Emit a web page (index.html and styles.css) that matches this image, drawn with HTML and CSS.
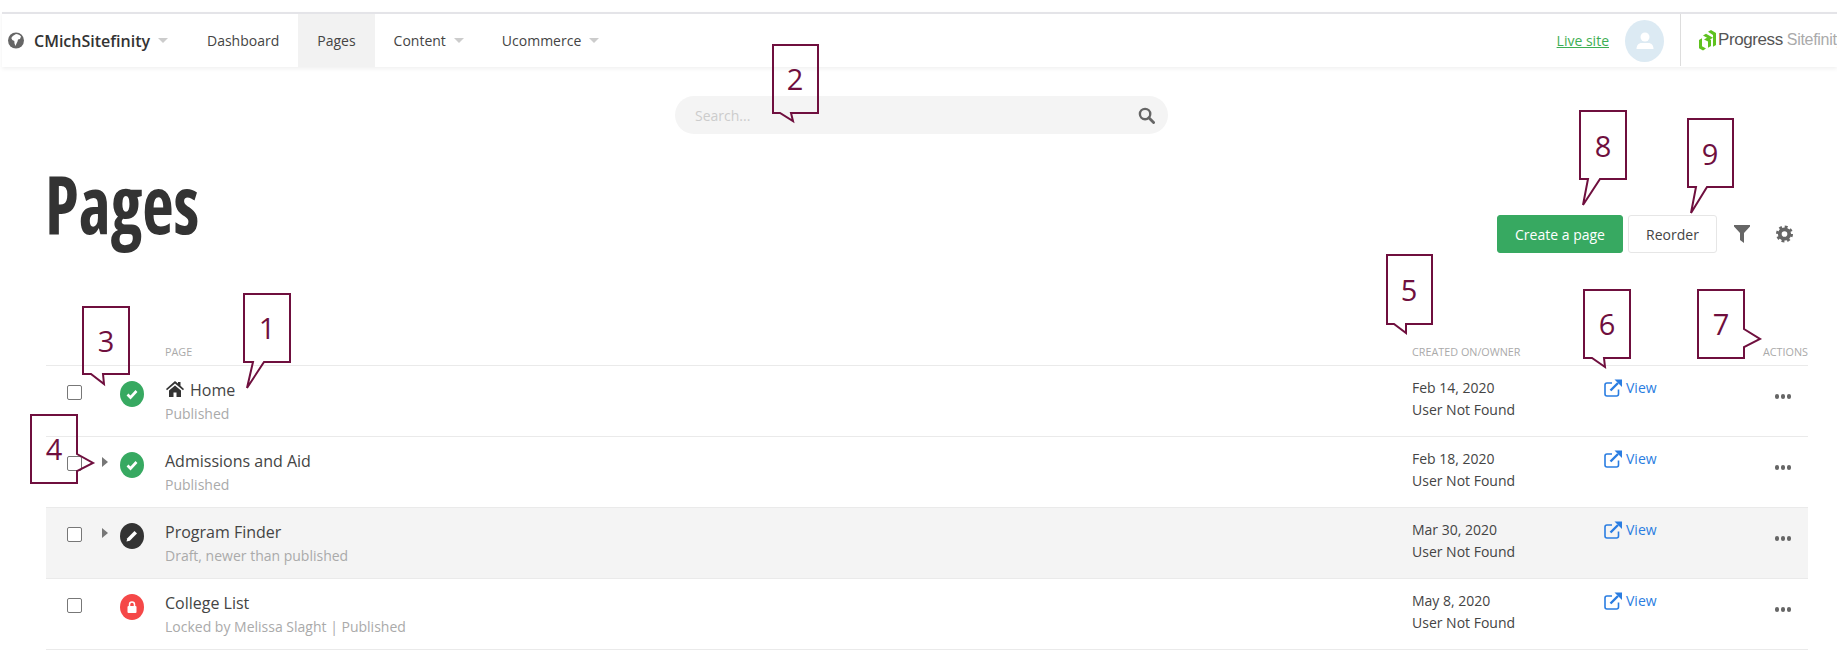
FILE: index.html
```html
<!DOCTYPE html>
<html lang="en">
<head>
    <meta charset="UTF-8">
    <meta name="viewport" content="width=device-width, initial-scale=1.0">
    <title>Pages</title>
    <link rel="stylesheet" href="styles.css">
</head>
<body>
    <header class="topbar">
        <div class="brand">
            <svg class="globe" viewBox="0 0 16 16"><circle cx="8" cy="8" r="8" fill="#666"/><path d="M8 1.500c2 .2 4 1 5 2.500l-1 2.500-2 .5-.5 2-1 2-1 2.500-1-2.500-.2-2.500-2-1-1-2 1.500-2z" fill="#fff"/></svg>
            <span class="brand-name">CMichSitefinity</span>
            <span class="caret"></span>
        </div>
        <nav class="nav">
            <a class="nav-item">Dashboard</a>
            <a class="nav-item active">Pages</a>
            <a class="nav-item">Content<span class="caret"></span></a>
            <a class="nav-item">Ucommerce<span class="caret"></span></a>
        </nav>
        <div class="topbar-right">
            <a class="live-link">Live site</a>
            <div class="avatar">
                <svg viewBox="0 0 24 24" width="24" height="24"><circle cx="12" cy="8" r="4.500" fill="#fff"/><path d="M3.500 20c0-4 2.500-6 5-6h7c2.500 0 5 2 5 6z" fill="#fff"/></svg>
            </div>
            <div class="vendor">
                <svg class="vendor-mark" viewBox="0 0 17 21"><path d="M0 10l3-1.700v8l4 2.300-3 2-4-2.300z M4 5.500l3-1.700 7 4-3 1.700z M5 9.500l3-1.700 4 2.300v6l-3 1.700v-6.200z M9 1.700L12 0l5 3v12l-3 1.700V5z" fill="#5fc21f"/></svg>
                <span class="vendor-name">Progress</span><span class="vendor-product">Sitefinity</span>
            </div>
        </div>
    </header>

    <div class="search-wrap">
        <div class="search">
            <span class="search-hint">Search...</span>
            <svg viewBox="0 0 18 18" width="17" height="17"><circle cx="7.500" cy="7.500" r="5.500" fill="none" stroke="#666" stroke-width="2.500"/><path d="M11.500 11.500L16.500 16.500" stroke="#666" stroke-width="3" stroke-linecap="round"/></svg>
        </div>
    </div>

    <div class="title-row">
        <h1 class="title">Pages</h1>
        <div class="toolbar">
            <button class="btn btn-primary">Create a page</button>
            <button class="btn">Reorder</button>
            <svg class="filter-icon" viewBox="0 0 16 18"><path d="M0 0h16v1.500L10 8v10l-4-3V8L0 1.500z" fill="#666"/></svg>
            <svg class="gear-icon" viewBox="0 0 18 18"><circle cx="9" cy="9" r="5" fill="none" stroke="#666" stroke-width="4"/><circle cx="9" cy="9" r="7.500" fill="none" stroke="#666" stroke-width="3" stroke-dasharray="3 2.890"/></svg>
        </div>
    </div>

    <section class="list">
        <div class="list-head">
            <span></span><span></span><span></span>
            <span>PAGE</span>
            <span>CREATED ON/OWNER</span>
            <span></span>
            <span class="head-actions">ACTIONS</span>
        </div>

        <div class="row">
            <input type="checkbox" class="check">
            <span></span>
            <span class="status ok"><svg viewBox="0 0 14 14" width="14" height="14"><path d="M2.500 7.500l3 3 6-6.500" fill="none" stroke="#fff" stroke-width="2.600"/></svg></span>
            <div class="page-cell">
                <div class="page-name"><svg class="home-icon" viewBox="0 0 18 16"><path d="M9 0l3 2.600V1h2.500v3.800L18 8l-1 1.200L9 2.400 1 9.200 0 8z M3 9.500L9 4.400l6 5.100V16h-4.500v-4.500h-3V16H3z" fill="#333"/></svg>Home</div>
                <div class="page-meta">Published</div>
            </div>
            <div class="owner">Feb 14, 2020<br>User Not Found</div>
            <a class="view"><svg viewBox="0 0 18 18" width="18" height="18"><path d="M14.500 10.500V15a2 2 0 0 1-2 2H3a2 2 0 0 1-2-2V6a2 2 0 0 1 2-2h5" fill="none" stroke="#2a7de1" stroke-width="1.600"/><path d="M6.500 11.500L14 4" stroke="#2a7de1" stroke-width="2.400"/><path d="M10.500 0.500H18V8z" fill="#2a7de1"/></svg>View</a>
            <span class="dots"><i></i><i></i><i></i></span>
        </div>

        <div class="row">
            <input type="checkbox" class="check">
            <span class="expander"></span>
            <span class="status ok"><svg viewBox="0 0 14 14" width="14" height="14"><path d="M2.500 7.500l3 3 6-6.500" fill="none" stroke="#fff" stroke-width="2.600"/></svg></span>
            <div class="page-cell">
                <div class="page-name">Admissions and Aid</div>
                <div class="page-meta">Published</div>
            </div>
            <div class="owner">Feb 18, 2020<br>User Not Found</div>
            <a class="view"><svg viewBox="0 0 18 18" width="18" height="18"><path d="M14.500 10.500V15a2 2 0 0 1-2 2H3a2 2 0 0 1-2-2V6a2 2 0 0 1 2-2h5" fill="none" stroke="#2a7de1" stroke-width="1.600"/><path d="M6.500 11.500L14 4" stroke="#2a7de1" stroke-width="2.400"/><path d="M10.500 0.500H18V8z" fill="#2a7de1"/></svg>View</a>
            <span class="dots"><i></i><i></i><i></i></span>
        </div>

        <div class="row hover">
            <input type="checkbox" class="check">
            <span class="expander"></span>
            <span class="status draft"><svg viewBox="0 0 14 14" width="14" height="14"><path d="M1.500 12.500l.8-3.300L9.500 2l2.500 2.500-7.200 7.200z" fill="#fff"/></svg></span>
            <div class="page-cell">
                <div class="page-name">Program Finder</div>
                <div class="page-meta">Draft, newer than published</div>
            </div>
            <div class="owner">Mar 30, 2020<br>User Not Found</div>
            <a class="view"><svg viewBox="0 0 18 18" width="18" height="18"><path d="M14.500 10.500V15a2 2 0 0 1-2 2H3a2 2 0 0 1-2-2V6a2 2 0 0 1 2-2h5" fill="none" stroke="#2a7de1" stroke-width="1.600"/><path d="M6.500 11.500L14 4" stroke="#2a7de1" stroke-width="2.400"/><path d="M10.500 0.500H18V8z" fill="#2a7de1"/></svg>View</a>
            <span class="dots"><i></i><i></i><i></i></span>
        </div>

        <div class="row">
            <input type="checkbox" class="check">
            <span></span>
            <span class="status locked"><svg viewBox="0 0 14 14" width="14" height="14"><path d="M4.500 6V4.500a2.500 2.500 0 0 1 5 0V6" fill="none" stroke="#fff" stroke-width="1.500"/><rect x="2.500" y="6" width="9" height="7" rx="1" fill="#fff"/></svg></span>
            <div class="page-cell">
                <div class="page-name">College List</div>
                <div class="page-meta">Locked by Melissa Slaght | Published</div>
            </div>
            <div class="owner">May 8, 2020<br>User Not Found</div>
            <a class="view"><svg viewBox="0 0 18 18" width="18" height="18"><path d="M14.500 10.500V15a2 2 0 0 1-2 2H3a2 2 0 0 1-2-2V6a2 2 0 0 1 2-2h5" fill="none" stroke="#2a7de1" stroke-width="1.600"/><path d="M6.500 11.500L14 4" stroke="#2a7de1" stroke-width="2.400"/><path d="M10.500 0.500H18V8z" fill="#2a7de1"/></svg>View</a>
            <span class="dots"><i></i><i></i><i></i></span>
        </div>
    </section>

    <!-- numbered callouts drawn over the screenshot -->
    <svg class="callouts" viewBox="0 0 1837 662" width="1837" height="662">
        <g class="callout">
            <path d="M244 294H290V362H264L247 388L253 362H244Z"/><text x="267" y="339">1</text>
        </g>
        <g class="callout">
            <path d="M773 45H818V113H791L793 121L780 113H773Z"/><text x="795" y="90">2</text>
        </g>
        <g class="callout">
            <path d="M83 307H129V374H103L104 384L91 374H83Z"/><text x="106" y="352">3</text>
        </g>
        <g class="callout">
            <path d="M31 415H77V454L93 463L77 471V483H31Z"/><text x="54" y="460">4</text>
        </g>
        <g class="callout">
            <path d="M1387 255H1432V324H1406V333L1394 324H1387Z"/><text x="1409" y="301">5</text>
        </g>
        <g class="callout">
            <path d="M1584 290H1630V358H1604L1605 367L1592 358H1584Z"/><text x="1607" y="335">6</text>
        </g>
        <g class="callout">
            <path d="M1698 290H1744V329L1760 339L1744 347V358H1698Z"/><text x="1721" y="335">7</text>
        </g>
        <g class="callout">
            <path d="M1580 111H1626V179H1600L1583 205L1588 179H1580Z"/><text x="1603" y="157">8</text>
        </g>
        <g class="callout">
            <path d="M1688 119H1733V187H1707L1691 213L1696 187H1688Z"/><text x="1710" y="165">9</text>
        </g>
    </svg>
</body>
</html>
```

FILE: styles.css
```css
* {
    box-sizing: border-box;
}
body {
    margin: 0;
    min-height: 662px;
    position: relative;
    overflow: hidden;
    background-color: white;
    color: #444;
    font-family: "Open Sans", sans-serif;
    font-size: 14px;
}

/* top bar */
.topbar {
    display: flex;
    align-items: stretch;
    height: 55px;
    margin: 12px 0 0 2px;
    border-top: 2px solid #e4e4e8;
    box-shadow: 0 2px 4px rgba(0, 0, 0, 0.06);
}
.brand {
    display: flex;
    align-items: center;
    width: 186px;
    padding-left: 6px;
}
.globe {
    width: 16px;
    height: 17px;
    margin-right: 10px;
}
.brand-name {
    font-size: 16px;
    font-weight: 600;
    color: #333;
}
.caret {
    display: inline-block;
    width: 0;
    height: 0;
    margin-left: 8px;
    border-left: 5px solid transparent;
    border-right: 5px solid transparent;
    border-top: 5px solid #ccc;
}
.nav {
    display: flex;
}
.nav-item {
    display: flex;
    align-items: center;
    padding: 0 19px;
    font-size: 14px;
    color: #444;
}
.nav-item.active {
    background-color: #f2f2f2;
}
.topbar-right {
    display: flex;
    align-items: center;
    margin-left: auto;
}
.live-link {
    margin-right: 16px;
    font-size: 14px;
    color: #3dae54;
    text-decoration: underline;
}
.avatar {
    display: flex;
    align-items: center;
    justify-content: center;
    width: 39px;
    height: 42px;
    margin-right: 16px;
    border-radius: 50%;
    background-color: #dceaf3;
}
.vendor {
    display: flex;
    align-items: center;
    width: 157px;
    height: 52px;
    align-self: flex-start;
    padding-left: 18px;
    border-left: 1px solid #ddd;
    overflow: hidden;
    white-space: nowrap;
}
.vendor-mark {
    flex: none;
    width: 17px;
    height: 21px;
    margin-right: 2px;
}
.vendor-name {
    font-family: "Liberation Sans", sans-serif;
    font-size: 17px;
    letter-spacing: -0.4px;
    color: #555;
}
.vendor-product {
    margin-left: 4px;
    font-family: "Liberation Sans", sans-serif;
    font-size: 16px;
    letter-spacing: -0.3px;
    color: #aaa;
}

/* search */
.search-wrap {
    display: flex;
    padding: 29px 0 0 675px;
}
.search {
    display: flex;
    align-items: center;
    justify-content: space-between;
    width: 493px;
    height: 38px;
    padding: 0 13px 0 20px;
    border-radius: 19px;
    background-color: #f4f4f4;
}
.search-hint {
    font-size: 14px;
    color: #ccc;
}

/* heading and buttons */
.title-row {
    display: flex;
    justify-content: space-between;
    align-items: flex-start;
    height: 211px;
    padding: 19px 44px 0 45px;
}
.title {
    margin: 0;
    font-size: 80px;
    line-height: 100px;
    font-weight: 700;
    font-stretch: 75%;
    color: #333;
    transform: scaleX(0.86);
    transform-origin: left center;
}
.toolbar {
    display: flex;
    align-items: center;
    margin-top: 62px;
}
.btn {
    height: 38px;
    width: 89px;
    margin-left: 5px;
    padding: 0;
    border: 1px solid #e6e6e6;
    border-radius: 3px;
    background-color: white;
    color: #444;
    font-family: "Open Sans", sans-serif;
    font-size: 14px;
}
.btn-primary {
    width: 126px;
    margin-left: 0;
    border-color: #37a961;
    background-color: #37a961;
    color: white;
}
.filter-icon {
    width: 16px;
    height: 18px;
    margin-left: 17px;
}
.gear-icon {
    width: 17px;
    height: 18px;
    margin-left: 26px;
}

/* page list */
.list {
    margin: 0 29px 0 46px;
}
.list-head,
.row {
    display: grid;
    grid-template-columns: 56px 18px 45px 1247px 192px 141px 63px;
    align-items: start;
}
.list-head {
    height: 21px;
    border-bottom: 1px solid #eaeaea;
    font-size: 10.800px;
    line-height: 14px;
    color: #aaa;
    white-space: nowrap;
}
.head-actions {
    direction: rtl;
}
.row {
    height: 71px;
    border-bottom: 1px solid #eaeaea;
}
.row.hover {
    background-color: #f4f4f4;
}
.check {
    appearance: none;
    width: 15px;
    height: 15px;
    margin: 19px 0 0 21px;
    border: 1px solid #777;
    border-radius: 2px;
    background-color: white;
}
.expander {
    width: 0;
    height: 0;
    margin-top: 20px;
    border-top: 5px solid transparent;
    border-bottom: 5px solid transparent;
    border-left: 6px solid #777;
}
.status {
    display: flex;
    align-items: center;
    justify-content: center;
    width: 24px;
    height: 26px;
    margin-top: 15px;
    border-radius: 50%;
}
.status.ok {
    background-color: #37a961;
}
.status.draft {
    background-color: #333;
}
.status.locked {
    background-color: #f54848;
}
.page-cell {
    padding-top: 13px;
}
.page-name {
    display: flex;
    align-items: center;
    font-size: 16px;
    line-height: 22px;
    color: #444;
}
.home-icon {
    width: 18px;
    height: 16px;
    margin: -3px 6px 0 1px;
}
.page-meta {
    font-size: 14px;
    line-height: 26px;
    color: #aaa;
}
.owner {
    padding-top: 11px;
    font-size: 14px;
    line-height: 22px;
    color: #444;
}
.view {
    display: flex;
    align-items: center;
    gap: 4px;
    padding-top: 12px;
    font-size: 14px;
    color: #2a7de1;
}
.dots {
    display: flex;
    justify-content: flex-end;
    gap: 1.500px;
    margin-top: 28px;
    padding-right: 17px;
}
.dots i {
    width: 4.500px;
    height: 4.500px;
    border-radius: 50%;
    background-color: #666;
}

/* callouts sit over everything */
.callouts {
    position: absolute;
    top: 0;
    left: 0;
    pointer-events: none;
}
.callout path {
    fill: none;
    stroke: #6f0f3e;
    stroke-width: 2;
}
.callout text {
    fill: #6f0f3e;
    font-family: "Open Sans", sans-serif;
    font-size: 29px;
    font-weight: 500;
    text-anchor: middle;
}
```
